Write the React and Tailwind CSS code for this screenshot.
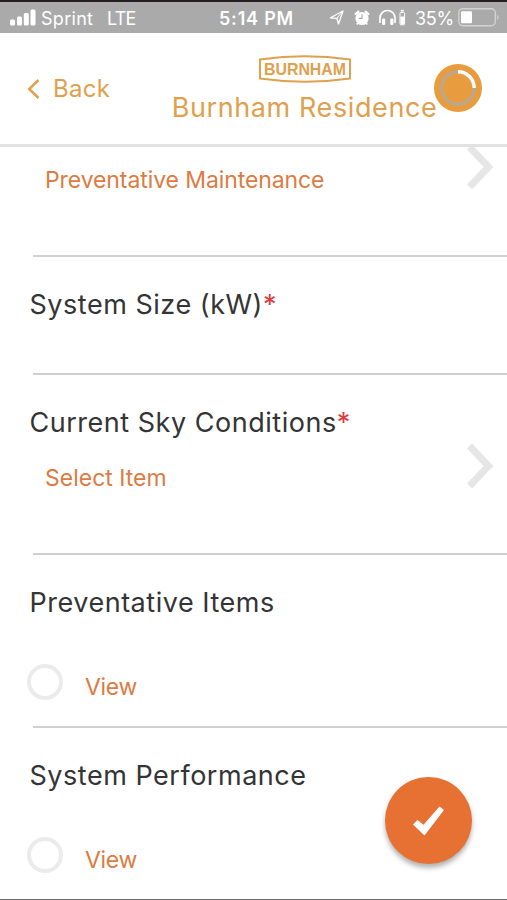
const SECTION_TITLE = "ml-[29.5px] text-[27px] leading-8 tracking-[0.52px] text-[#343436] whitespace-nowrap";

function SignalBars() {
    return (
        <svg width="26" height="17" viewBox="0 0 26 17" fill="#fff">
            <rect x="0" y="10.5" width="5" height="6" rx="1.5" />
            <rect x="7" y="7.5" width="5" height="9" rx="1.5" />
            <rect x="13.8" y="4" width="5" height="12.5" rx="1.5" />
            <rect x="20.5" y="0.5" width="5" height="16" rx="1.5" />
        </svg>
    );
}

function StatusIcons() {
    return (
        <svg width="78" height="20" viewBox="0 0 78 20" fill="none" stroke="#fff">
            {/* Location arrow */}
            <path d="M1.5 9.8 L14 3 L9.5 16 L7.9 10.3 Z" strokeWidth="1.3" strokeLinejoin="round" />
            <path d="M7.9 10.3 L14 3" strokeWidth="1" />
            {/* Alarm clock */}
            <circle cx="33" cy="10.5" r="6.6" fill="#fff" stroke="none" />
            <path d="M26.6 6 L29.4 3.6 M39.4 6 L36.6 3.6" strokeWidth="2.2" strokeLinecap="round" />
            <path d="M28.8 15 L27.8 16.5 M37.2 15 L38.2 16.5" strokeWidth="1.6" />
            <path d="M29.8 10.3 H33 V6.3" stroke="#aaa" strokeWidth="1.2" />
            {/* Headphones with their battery */}
            <path d="M51 15 V10 A7.5 7.5 0 0 1 66 10 V15" strokeWidth="1.7" />
            <rect x="53" y="10.5" width="3.2" height="6.5" rx="1.2" fill="#fff" stroke="none" />
            <rect x="61.2" y="10.5" width="3.2" height="6.5" rx="1.2" fill="#fff" stroke="none" />
            <rect x="71" y="4.5" width="4.6" height="12.3" rx="1" strokeWidth="1" />
            <path d="M71.8 2.7 H74.8" strokeWidth="1.6" />
            <rect x="71.5" y="8.5" width="3.6" height="8" fill="#fff" stroke="none" />
        </svg>
    );
}

function Battery() {
    return (
        <svg width="42" height="19" viewBox="0 0 42 19" fill="none">
            <rect x="0.8" y="0.8" width="36.5" height="17" rx="4" stroke="#d2d2d2" strokeWidth="1.4" />
            <rect x="3" y="3.2" width="11" height="12" rx="1.2" fill="#fff" />
            <path d="M39.2 6.5 Q42 9.3 39.2 12.3 Z" fill="#d2d2d2" />
        </svg>
    );
}

function StatusBar() {
    return (
        <div className="h-[33px] shrink-0 border-t-2 border-[#231f20] bg-[#aaaaaa] flex items-center pl-[10px] text-white text-[18px] leading-[31px] whitespace-nowrap">
            <SignalBars />
            <span className="mt-px ml-[5px] w-[66px] tracking-[0.3px]">Sprint</span>
            <span className="mt-px w-[112px] tracking-[-0.8px]">LTE</span>
            <span className="mt-px w-[110px] font-semibold tracking-[0.8px]">5:14 PM</span>
            <StatusIcons />
            <span className="mt-px ml-[8px] w-[43px] tracking-[-0.3px]">35%</span>
            <Battery />
        </div>
    );
}

function BurnhamLogo() {
    return (
        <svg width="92" height="28" viewBox="0 0 92 28" fill="none">
            <path d="M1 4.5 Q46 -2 91 4.5 V23.5 Q46 30 1 23.5 Z" stroke="#dfa050" strokeWidth="2" />
            <text x="5" y="19.6" textLength="82" lengthAdjust="spacingAndGlyphs" fill="#e0a04e" fontSize="16.5" fontWeight="700" fontFamily="Liberation Sans, Arial, sans-serif">
                BURNHAM
            </text>
        </svg>
    );
}

function Spinner() {
    return (
        <svg className="ml-[-3px] mt-[31px] shrink-0" width="48" height="48" viewBox="0 0 48 48" fill="none">
            <circle cx="24" cy="24" r="24" fill="#e99c3e" />
            <circle cx="24" cy="24" r="16.2" stroke="#bba88c" strokeWidth="3.4" />
            <path d="M24 7.8 A16.2 16.2 0 0 1 40.2 24" stroke="#fff" strokeWidth="3.4" />
        </svg>
    );
}

function Header() {
    return (
        <header className="h-[114px] shrink-0 border-b-[3px] border-[#e2e2e2] flex items-start text-[#e0a04e] whitespace-nowrap">
            <button className="mt-[40px] ml-[27px] w-[145px] flex items-center text-[24px] leading-8 tracking-[0.3px]">
                <svg className="mr-[13px]" width="13" height="21" viewBox="0 0 13 21" fill="none">
                    <path d="M11.5 1 L2.2 10 L11.5 19" stroke="currentColor" strokeWidth="2.5" />
                </svg>
                Back
            </button>
            <div className="mt-[22px] w-[265px] flex flex-col items-center">
                <BurnhamLogo />
                <h1 className="mt-[9px] text-[27px] leading-8 tracking-[0.6px]">Burnham Residence</h1>
            </div>
            <Spinner />
        </header>
    );
}

function Chevron({ className }) {
    return (
        <svg className={className} width="28" height="48" viewBox="0 0 28 48" fill="none">
            <path d="M3.5 4 L22.5 24 L3.5 44" stroke="#e6e6e6" strokeWidth="7" />
        </svg>
    );
}

function Divider() {
    return <div className="mt-auto ml-[33px] h-[2px] bg-[#d0d0d0]" />;
}

function ViewRow() {
    return (
        <div className="mt-[42px] ml-[27px] flex items-center">
            <span className="w-9 h-9 rounded-full border-[4px] border-[#ebebeb]" />
            <span className="mt-[10px] ml-[22px] text-[23px] leading-8 tracking-[-0.3px] text-[#dc7b43]">View</span>
        </div>
    );
}

export default function App() {
    return (
        <div className="relative w-[507px] h-[900px] overflow-hidden bg-white flex flex-col font-['Inter',sans-serif]">
            <StatusBar />
            <Header />

            <section className="h-[110px] shrink-0 overflow-hidden flex flex-col">
                <div className="flex items-start justify-between pl-[45px] pr-[13px] text-[23px] leading-8 text-[#dc7b43]">
                    <span className="mt-[17px] tracking-[-0.09px] whitespace-nowrap">Preventative Maintenance</span>
                    <Chevron className="mt-[-4px]" />
                </div>
                <Divider />
            </section>

            <section className="h-[118px] shrink-0 pt-8 flex flex-col">
                <h2 className={SECTION_TITLE}>
                    System Size (kW)<span className="text-[#e0393e]">*</span>
                </h2>
                <Divider />
            </section>

            <section className="h-[180px] shrink-0 pt-8 flex flex-col">
                <h2 className={SECTION_TITLE}>
                    Current Sky Conditions<span className="text-[#e0393e]">*</span>
                </h2>
                <div className="flex items-start justify-between pl-[45px] pr-[13px] text-[23px] leading-8 text-[#dc7b43]">
                    <span className="mt-[23px]">Select Item</span>
                    <Chevron className="mt-[3px]" />
                </div>
                <Divider />
            </section>

            <section className="h-[173px] shrink-0 pt-8 flex flex-col">
                <h2 className={SECTION_TITLE}>Preventative Items</h2>
                <ViewRow />
                <Divider />
            </section>

            <section className="h-[172px] shrink-0 pt-8 border-b border-[#6b6b6b]">
                <h2 className={SECTION_TITLE}>System Performance</h2>
                <ViewRow />
            </section>

            {/* Floating submit button */}
            <button
                className="absolute left-[384.5px] top-[777px] w-[87px] h-[87px] rounded-full bg-[#e67132] shadow-[0_4px_5px_rgba(0,0,0,0.3)] flex items-center justify-center"
                aria-label="Submit"
            >
                <svg width="31" height="30" viewBox="0 0 31 30" fill="#fff">
                    <path d="M0 18.5 L4.5 14 L10.5 18.8 L26.5 0.5 L31 4 L11.5 29.5 Z" />
                </svg>
            </button>
        </div>
    );
}
